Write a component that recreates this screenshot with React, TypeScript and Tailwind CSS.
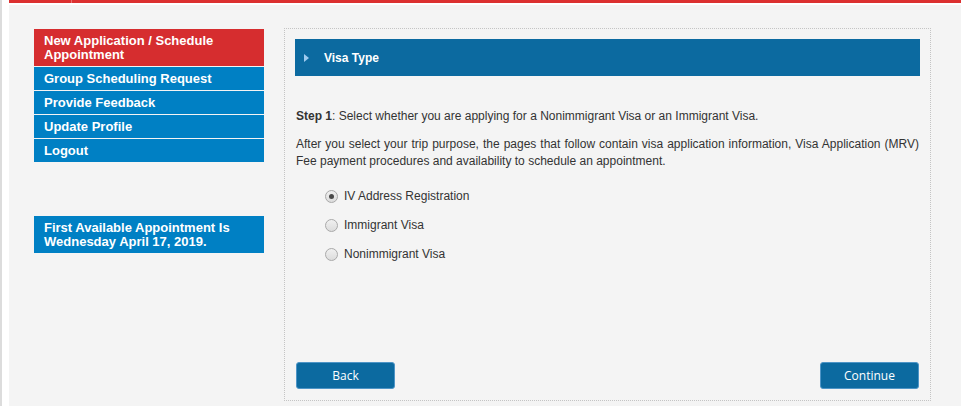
import React from 'react';

const menuItems = [
  { label: 'New Application / Schedule Appointment', active: true },
  { label: 'Group Scheduling Request' },
  { label: 'Provide Feedback' },
  { label: 'Update Profile' },
  { label: 'Logout' },
];

const visaOptions = [
  { label: 'IV Address Registration', checked: true },
  { label: 'Immigrant Visa' },
  { label: 'Nonimmigrant Visa' },
];

function Radio({ checked }: { checked?: boolean }) {
  return (
    <span className="flex h-[13px] w-[13px] items-center justify-center rounded-full border border-[#a9a9a9] bg-gradient-to-b from-[#f0f0f0] to-[#dcdcdc]">
      {checked && <span className="h-[5px] w-[5px] rounded-full bg-[#4a4a4a]" />}
    </span>
  );
}

function Sidebar() {
  return (
    <div className="w-[230px] shrink-0 pt-px">
      <ul className="flex flex-col gap-px">
        {menuItems.map((item) => (
          <li
            key={item.label}
            className={
              'px-[10px] pt-[5px] pb-[4px] text-[13px] font-bold leading-[14px] text-white ' +
              (item.active ? 'bg-[#d62d2f]' : 'bg-[#0080c4]')
            }
          >
            {item.label}
          </li>
        ))}
      </ul>
      <div className="mt-[54px] bg-[#0080c4] px-[10px] pt-[5px] pb-[4px] text-[13px] font-bold leading-[14px] text-white">
        First Available Appointment Is Wednesday April 17, 2019.
      </div>
    </div>
  );
}

function VisaPanel() {
  return (
    <div className="flex h-[373px] flex-1 flex-col border border-dotted border-[#c4c4c4] px-[10px] pt-[10px] pb-[11px]">
      <div className="flex h-[37px] items-center bg-[#0c6aa0] pl-[9px]">
        <svg width="5" height="8" viewBox="0 0 5 8" className="mr-[15px]">
          <path d="M0 0 L5 4 L0 8 Z" fill="#9fcbef" />
        </svg>
        <span className="text-[12px] font-bold text-white">Visa Type</span>
      </div>

      <div className="px-px pt-[32px] text-[12px] leading-[17px] text-[#333]">
        <p>
          <b>Step 1</b>: Select whether you are applying for a Nonimmigrant Visa or an Immigrant Visa.
        </p>
        <p className="mt-[11px] text-justify">
          After you select your trip purpose, the pages that follow contain visa application information, Visa Application (MRV) Fee payment procedures and availability to schedule an appointment.
        </p>

        <ul className="mt-[18px] flex flex-col gap-[12px] pl-[29px]">
          {visaOptions.map((opt) => (
            <li key={opt.label} className="flex items-center gap-[6px]">
              <Radio checked={opt.checked} />
              <span>{opt.label}</span>
            </li>
          ))}
        </ul>
      </div>

      <div className="mt-auto flex justify-between px-px">
        <button className="h-[27px] w-[99px] rounded-[3px] border border-[#4e95c7] bg-[#0c6aa0] text-[12px] text-white [font-family:'Open_Sans',sans-serif]">
          Back
        </button>
        <button className="h-[27px] w-[99px] rounded-[3px] border border-[#4e95c7] bg-[#0c6aa0] text-[12px] text-white [font-family:'Open_Sans',sans-serif]">
          Continue
        </button>
      </div>
    </div>
  );
}

export default function App() {
  return (
    <div className="flex h-[406px] w-[961px] overflow-hidden bg-white [font-family:'Liberation_Sans',Arial,sans-serif]">
      <div className="w-[2px] shrink-0 bg-[#dcdcdc]" />
      <div className="w-[7px] shrink-0 bg-white" />
      <div className="flex flex-1 flex-col">
        <div className="flex h-[3px] shrink-0">
          <div className="w-[62px] bg-[#dc3030]" />
          <div className="w-px bg-[#e87070]" />
          <div className="flex-1 bg-[#dc3030]" />
        </div>
        <div className="h-[2px] shrink-0 bg-white" />
        <div className="flex flex-1 gap-[20px] bg-[#f4f4f4] pt-[23px] pl-[25px] pr-[30px]">
          <Sidebar />
          <VisaPanel />
        </div>
      </div>
    </div>
  );
}
